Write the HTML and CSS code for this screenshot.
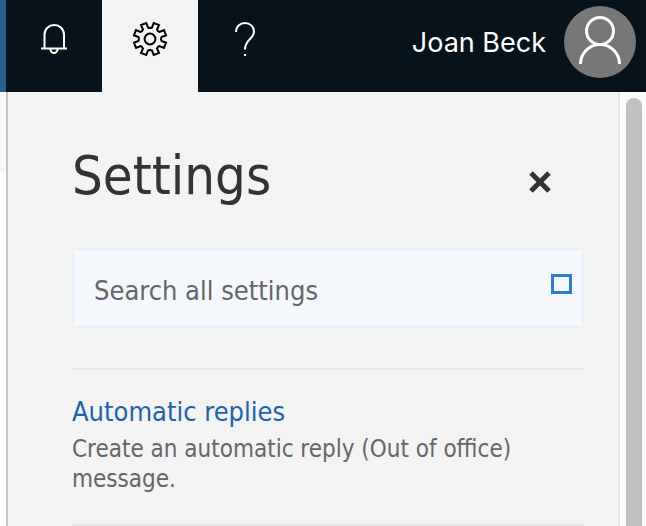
FILE: index.html
```
<!DOCTYPE html>
<html lang="en">
  <head>
    <meta charset="utf-8">
    <meta name="viewport" content="width=device-width, initial-scale=1">
    <link rel="stylesheet" href="styles.css">
    <title>Settings</title>
  </head>
  <body>
    <header class="topbar">
      <button class="topbar-button" type="button" aria-label="Notifications">
        <svg width="36" height="36" viewBox="0 0 36 36" fill="none" stroke="#fff" stroke-width="2">
          <path d="M5 27.5H31M8.500 27V13.500a9.750 9.500 0 0 1 19.500 0V27M14.500 28a3.500 4 0 0 0 7 0" />
        </svg>
      </button>
      <button class="topbar-button active" type="button" aria-label="Settings">
        <svg width="36" height="36" viewBox="-18 -18 36 36" fill="none" stroke="#000" stroke-width="2">
          <path d="M-2-11.5Q0-10.5 2-11.5L3.7-16 9-14 7-9.5Q7.6-7.6 9.5-7L14-9 16-3.7 11.5-2Q10.5 0 11.5 2L16 3.7 14 9 9.5 7Q7.6 7.6 7 9.5L9 14 3.7 16 2 11.5Q0 10.5-2 11.5L-3.7 16-9 14-7 9.5Q-7.6 7.6-9.5 7L-14 9-16 3.7-11.5 2Q-10.5 0-11.5-2L-16-3.7-14-9-9.5-7Q-7.6-7.6-7-9.5L-9-14-3.7-16Z" />
          <circle r="5.4" />
        </svg>
      </button>
      <button class="topbar-button" type="button" aria-label="Help">
        <svg width="36" height="36" viewBox="0 0 36 36" fill="none" stroke="#fff" stroke-width="2">
          <path d="M8 11C8 5.500 12 2 17 2C22 2 26 5.500 26 10.500C26 18 17 18.500 17 28.500M17 33V35" />
        </svg>
      </button>
      <button class="account" type="button">
        <span>Joan Beck</span>
        <svg class="avatar" width="72" height="72" viewBox="0 0 72 72" fill="none" stroke="#fff" stroke-width="3">
          <circle cx="36" cy="25" r="13.5" />
          <path d="M16.5 58a19.5 19.5 0 0 1 39 0" />
        </svg>
      </button>
    </header>
    <div class="content">
      <div class="page-edge"></div>
      <main class="panel">
        <div class="panel-header">
          <h1>Settings</h1>
          <button class="close" type="button" aria-label="Close">
            <svg width="24" height="24" viewBox="0 0 24 24" stroke="#333" stroke-width="5">
              <path d="M3 3L21 21M21 3L3 21" />
            </svg>
          </button>
        </div>
        <form class="search">
          <input type="search" placeholder="Search all settings" aria-label="Search all settings">
          <button class="search-button" type="submit" aria-label="Search">
            <span class="search-icon"></span>
          </button>
        </form>
        <section class="setting">
          <a href="#">Automatic replies</a>
          <p>Create an automatic reply (Out of office) message.</p>
        </section>
        <section class="setting"></section>
      </main>
      <div class="scrollbar"><div class="thumb"></div></div>
    </div>
  </body>
</html>
```
FILE: styles.css
```
* {
  box-sizing: border-box;
}
body {
  display: flex;
  flex-direction: column;
  height: 100vh;
  margin: 0;
  overflow: hidden;
  background-color: #fff;
  font-family: "DejaVu Sans Condensed", "DejaVu Sans", sans-serif;
}
button {
  padding: 0;
  border: 0;
  background: none;
  cursor: pointer;
}
svg {
  display: block;
}
.topbar {
  display: flex;
  flex: none;
  height: 92px;
  border-left: 6px solid #295f90;
  background-color: #08121b;
}
.topbar-button {
  display: flex;
  justify-content: center;
  width: 96px;
  padding-top: 21px;
}
.topbar-button.active {
  background-color: #f3f3f3;
}
.account {
  display: flex;
  align-items: center;
  gap: 18px;
  margin-left: auto;
  padding: 0 10px 8px 0;
  color: #fff;
  font-family: Inter, sans-serif;
  font-size: 27px;
}
.avatar {
  border-radius: 50%;
  background-color: #777;
}
.content {
  display: flex;
  flex: 1;
  min-height: 0;
}
.page-edge {
  width: 6px;
  background: linear-gradient(#f4f8fd 80px, #fff 80px);
}
.panel {
  flex: 1;
  overflow: hidden;
  padding: 48px 34px 0 64px;
  border-left: 2px solid #c6c6c6;
  border-right: 2px solid #e6e6e6;
  background-color: #f3f3f3;
}
.panel-header {
  display: flex;
  align-items: center;
  justify-content: space-between;
  padding-right: 32px;
}
h1 {
  margin: 0;
  color: #333;
  font-size: 54px;
  font-weight: normal;
  line-height: 72px;
}
.close {
  padding-top: 12px;
}
.search {
  display: flex;
  height: 80px;
  margin-top: 36px;
  border: 2px solid #e5f1fa;
  background-color: #f4f8fd;
}
.search input {
  flex: 1;
  min-width: 0;
  padding: 4px 0 0 20px;
  border: 0;
  outline: 0;
  background: none;
  color: #333;
  font-family: inherit;
  font-size: 27px;
}
.search input::placeholder {
  color: #666;
  opacity: 1;
}
.search-button {
  padding: 0 10px 8px;
}
.search-icon {
  display: block;
  width: 21px;
  height: 20px;
  border: 3px solid #2b7cd3;
}
.setting {
  margin-top: 40px;
  padding-top: 24px;
  border-top: 2px solid #e8e8e8;
}
.setting + .setting {
  margin-top: 30px;
}
.setting a {
  display: block;
  color: #2262ac;
  font-size: 27px;
  line-height: 36px;
  text-decoration: none;
}
.setting p {
  margin: 4px 0 0;
  color: #666;
  font-size: 24px;
  line-height: 30px;
}
.scrollbar {
  width: 26px;
  padding: 6px 4px 0 6px;
  background-color: #fafafa;
}
.thumb {
  height: 100%;
  border-radius: 8px 8px 0 0;
  background-color: #c1c1c1;
}
```
